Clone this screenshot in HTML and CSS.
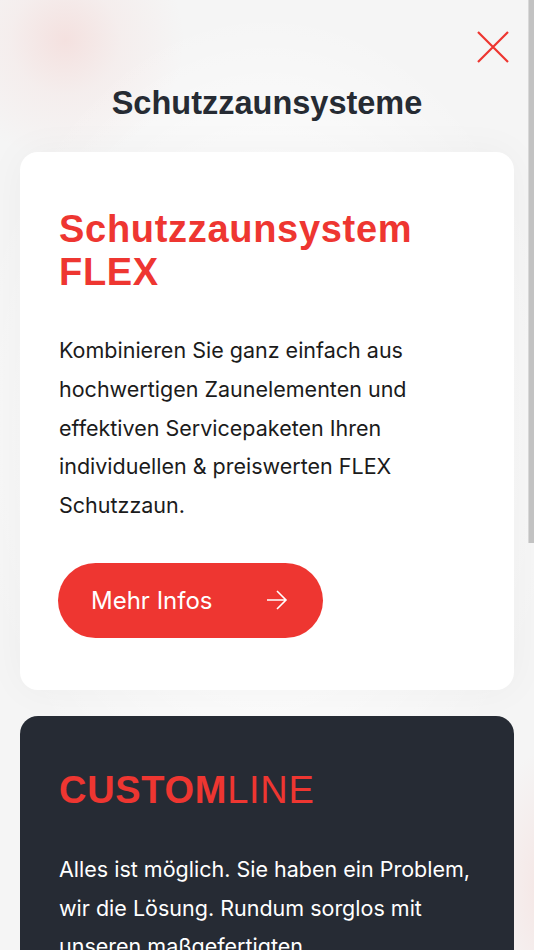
FILE: index.html
```html
<!DOCTYPE html>
<html lang="de">
<head>
<meta charset="utf-8">
<title>Schutzzaunsysteme</title>
<link rel="stylesheet" href="styles.css">
</head>
<body>
<div class="page">
  <header class="header">
    <button class="close" aria-label="Schließen">
      <svg width="32" height="32" viewBox="0 0 32 32"><path d="M1 1 L31 31 M31 1 L1 31" stroke="#ee3530" stroke-width="2.2" fill="none"/></svg>
    </button>
  </header>
  <h1 class="title">Schutzzaunsysteme</h1>
  <main class="cards">
    <section class="card card-light">
      <h2 class="card-title">Schutzzaunsystem FLEX</h2>
      <p class="card-text">Kombinieren Sie ganz einfach aus hochwertigen Zaunelementen und effektiven Servicepaketen Ihren individuellen &amp; preiswerten FLEX Schutzzaun.</p>
      <a class="btn" href="#">
        <span>Mehr Infos</span>
        <svg width="22" height="22" viewBox="0 0 22 22"><path d="M1 11 H20 M11 2 L20 11 L11 20" stroke="#fff" stroke-width="1.6" fill="none"/></svg>
      </a>
    </section>
    <section class="card card-dark">
      <h2 class="card-title"><strong>CUSTOM</strong><span class="light">LINE</span></h2>
      <p class="card-text">Alles ist möglich. Sie haben ein Problem, wir die Lösung. Rundum sorglos mit unseren maßgefertigten Schutzzaunsystemen.</p>
    </section>
  </main>
  <div class="scrollbar"></div>
</div>
</body>
</html>
```
FILE: styles.css
```css
html, body {
  margin: 0;
  padding: 0;
  height: 950px;
  overflow: hidden;
}
body {
  background: #f6f6f6;
  font-family: Inter, "Noto Sans", sans-serif;
}
.page {
  position: relative;
  width: 534px;
  height: 950px;
  overflow: hidden;
  background:
    radial-gradient(circle at 65px 40px, rgba(240, 120, 110, 0.16), rgba(240, 120, 110, 0.06) 55px, rgba(240, 120, 110, 0) 120px),
    radial-gradient(ellipse 60px 140px at 545px 890px, rgba(245, 150, 140, 0.16), rgba(245, 150, 140, 0) 100%),
    radial-gradient(ellipse 300px 420px at 267px 430px, #ffffff 40%, rgba(255,255,255,0) 100%),
    #f5f5f5;
}
.header {
  display: flex;
  justify-content: flex-end;
  padding: 31px 25px 0 0;
}
.close {
  border: 0;
  background: none;
  padding: 0;
  width: 32px;
  height: 32px;
  display: block;
  cursor: pointer;
}
.close svg { display: block; }
.title {
  margin: 22px 0 0;
  font-family: "Liberation Sans", Arial, sans-serif;
  font-weight: 700;
  font-size: 32.5px;
  line-height: 36px;
  color: #262b33;
  text-align: center;
}
.cards {
  display: flex;
  flex-direction: column;
  gap: 26px;
  padding: 31px 20px 0;
}
.card {
  border-radius: 18px;
  padding: 56px 39px 52px;
}
.card-light {
  background: #ffffff;
  box-shadow: 0 0 40px rgba(0, 0, 0, 0.04);
}
.card-dark {
  background: #262b34;
  padding-top: 53px;
}
.card-title {
  margin: 0;
  font-family: "Liberation Sans", Arial, sans-serif;
  font-weight: 700;
  font-size: 38px;
  line-height: 43px;
  letter-spacing: 0.7px;
  color: #ee3631;
}
.card-title strong { font-weight: 700; }
.card-title .light { font-weight: 400; }
.card-text {
  margin: 37px 0 0;
  font-size: 21.5px;
  line-height: 38.75px;
  color: #1b1b1b;
}
.card-dark .card-text {
  color: #ffffff;
  margin-top: 38px;
}
.btn {
  margin-top: 38px;
  margin-left: -1px;
  width: 265px;
  height: 75px;
  box-sizing: border-box;
  border-radius: 38px;
  background: #ee3631;
  color: #ffffff;
  text-decoration: none;
  display: flex;
  align-items: center;
  justify-content: space-between;
  padding: 0 35px 0 33px;
  font-size: 24px;
}
.btn svg { display: block; }
.scrollbar {
  position: absolute;
  top: 0;
  right: 0;
  width: 5px;
  height: 543px;
  background: #c2c2c2;
  border-left: 1px solid #d8d8d8;
}
```
